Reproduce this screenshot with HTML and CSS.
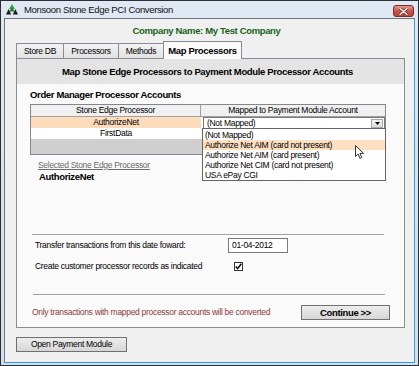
FILE: index.html
```html
<!DOCTYPE html>
<html>
<head>
<meta charset="utf-8">
<link rel="stylesheet" href="styles.css">
</head>
<body>
<div class="window">
  <div class="titlebar">
    <svg class="app-icon" width="12" height="11" viewBox="0 0 12 11">
      <polygon points="6,0 9,5 3,5" fill="#3aa546"/>
      <polygon points="6,3 8.6,7.5 3.4,7.5" fill="#1d7d2b"/>
      <polygon points="2.6,5 5.2,10.5 0,10.5" fill="#1e1e1e"/>
      <polygon points="9.4,5 12,10.5 6.8,10.5" fill="#1e1e1e"/>
    </svg>
    <span class="title">Monsoon Stone Edge PCI Conversion</span>
    <div class="close">
      <svg width="9" height="7" viewBox="0 0 9 7">
        <path d="M1,0.5 L8,6.5 M8,0.5 L1,6.5" stroke="#5a1c18" stroke-width="2.6" stroke-linecap="round"/>
        <path d="M1,0.5 L8,6.5 M8,0.5 L1,6.5" stroke="#ffffff" stroke-width="1.4" stroke-linecap="round"/>
      </svg>
    </div>
  </div>
  <div class="client">
    <div class="company">Company Name: My Test Company</div>
    <div class="tabs">
      <div class="tab tab-store">Store DB</div>
      <div class="tab tab-proc">Processors</div>
      <div class="tab tab-methods">Methods</div>
      <div class="tab tab-map active">Map Processors</div>
    </div>
    <div class="panel">
      <div class="panel-header">Map Stone Edge Processors to Payment Module Processor Accounts</div>
      <div class="panel-body">
        <div class="section-title">Order Manager Processor Accounts</div>
        <div class="grid">
          <div class="grid-head">
            <div class="hcell first">Stone Edge Processor</div>
            <div class="hcell">Mapped to Payment Module Account</div>
          </div>
          <div class="grid-row">
            <div class="cell selected">AuthorizeNet</div>
            <div class="cell combo-cell">
              <div class="combo">
                <span class="combo-text">(Not Mapped)</span>
                <span class="combo-btn">
                  <svg width="5" height="3" viewBox="0 0 5 3"><polygon points="0,0 5,0 2.5,3" fill="#000"/></svg>
                </span>
              </div>
            </div>
          </div>
          <div class="grid-row">
            <div class="cell">FirstData</div>
            <div class="cell"></div>
          </div>
          <div class="dropdown">
            <div class="item">(Not Mapped)</div>
            <div class="item hot">Authorize Net AIM (card not present)</div>
            <div class="item">Authorize Net AIM (card present)</div>
            <div class="item">Authorize Net CIM (card not present)</div>
            <div class="item">USA ePay CGI</div>
          </div>
          <svg class="cursor" width="11" height="15" viewBox="0 0 11 15">
            <path d="M0.5,0.5 L0.5,11.5 L3.1,9.1 L4.9,13.3 L6.8,12.5 L5,8.4 L8.6,8.4 Z" fill="#ffffff" stroke="#333" stroke-width="1" stroke-linejoin="round"/>
          </svg>
        </div>
        <div class="selected-label">Selected Stone Edge Processor</div>
        <div class="selected-value">AuthorizeNet</div>
        <div class="separator sep1"></div>
        <div class="field field-date">
          <span class="field-label date-label">Transfer transactions from this date foward:</span>
          <span class="date-input">01-04-2012</span>
        </div>
        <div class="field field-check">
          <span class="field-label check-label">Create customer processor records as indicated</span>
          <span class="checkbox">
            <svg width="7" height="7" viewBox="0 0 7 7"><path d="M0.8,3.6 L2.6,5.6 L6.3,0.8" fill="none" stroke="#000" stroke-width="1.5"/></svg>
          </span>
        </div>
        <div class="separator sep2"></div>
        <div class="footer">
          <span class="note">Only transactions with mapped processor accounts will be converted</span>
          <span class="btn btn-continue">Continue &gt;&gt;</span>
        </div>
      </div>
    </div>
    <div class="bottom">
      <span class="btn btn-open">Open Payment Module</span>
    </div>
  </div>
</div>
</body>
</html>
```

FILE: styles.css
```css
* { box-sizing: border-box; }

html, body {
  margin: 0;
  padding: 0;
  background: #ffffff;
}

body {
  font-family: "Liberation Sans", Arial, sans-serif;
  font-size: 8.5px;
  letter-spacing: -0.3px;
  color: #000;
}

.window {
  width: 419px;
  height: 366px;
  border: 1px solid #2a2f36;
  background: linear-gradient(#dfe8f3, #d4dfec);
  display: flex;
  flex-direction: column;
  overflow: hidden;
}

.titlebar {
  height: 17px;
  flex: none;
  display: flex;
  align-items: center;
  padding-left: 5px;
}

.app-icon {
  flex: none;
  margin-right: 6px;
}

.title {
  font-size: 9.5px;
  letter-spacing: -0.35px;
  color: #111;
  line-height: 12px;
}

.close {
  margin-left: auto;
  margin-right: 4px;
  margin-top: 3px;
  width: 21px;
  height: 12px;
  border: 1px solid #7c2e28;
  border-radius: 3px;
  background: linear-gradient(#e39a8f, #c9554b 50%, #b8433a);
  display: flex;
  align-items: center;
  justify-content: center;
}

.client {
  flex: 1;
  margin: 0 3px 2px 3px;
  border: 1px solid;
  border-color: #6e7682 #2e9ee2 #2e9ee2 #6e7682;
  background: #f0f0f0;
  padding: 6px 9px 0 11px;
  display: flex;
  flex-direction: column;
}

.company {
  text-align: center;
  font-weight: bold;
  font-size: 9.5px;
  letter-spacing: -0.35px;
  line-height: 12px;
  color: #176317;
  padding-right: 8px;
}

.tabs {
  margin-top: 4px;
  height: 17px;
  display: flex;
  align-items: flex-end;
}

.tab {
  height: 15px;
  border: 1px solid #898c95;
  border-bottom: none;
  background: linear-gradient(#f3f3f3, #e2e2e2);
  display: flex;
  align-items: center;
  justify-content: center;
  line-height: 11px;
  padding-top: 1px;
  white-space: nowrap;
}

.tab + .tab { margin-left: -1px; }

.tab-store { width: 48px; }
.tab-proc { width: 56px; }
.tab-methods { width: 46px; }
.tab-map { width: 79px; }

.tab.active {
  height: 18px;
  margin-bottom: -1px;
  background: #fafafa;
  font-weight: bold;
  font-size: 9.5px;
  letter-spacing: -0.35px;
  position: relative;
  z-index: 2;
  padding-top: 0;
}

.panel {
  width: 389px;
  height: 270px;
  border: 1px solid #898c95;
  background: #fafafa;
  display: flex;
  flex-direction: column;
}

.panel-header {
  height: 25px;
  flex: none;
  background: #e4e4e4;
  display: flex;
  align-items: center;
  justify-content: center;
  font-weight: bold;
  font-size: 9.5px;
  letter-spacing: -0.35px;
  padding-right: 6px;
}

.panel-body {
  padding: 5px 14px 0 13px;
  display: flex;
  flex-direction: column;
}

.section-title {
  font-weight: bold;
  font-size: 9.5px;
  letter-spacing: -0.35px;
  line-height: 12px;
}

.grid {
  margin-top: 3px;
  width: 356px;
  height: 51px;
  border: 1px solid #828790;
  background: #cfcfcf;
  position: relative;
}

.grid-head {
  display: grid;
  grid-template-columns: 170px 1fr;
  height: 12px;
  background: #f0f0f0;
  border-bottom: 1px solid #a0a0a0;
}

.hcell {
  text-align: center;
  line-height: 11px;
}

.hcell.first { border-right: 1px solid #a0a0a0; }

.grid-row {
  display: grid;
  grid-template-columns: 170px 1fr;
  height: 11px;
}

.cell {
  text-align: center;
  line-height: 11px;
  background: #ffffff;
}

.cell.selected { background: #fddcbb; }

.combo-cell { position: relative; }

.combo {
  position: absolute;
  left: 2px;
  top: 0;
  width: 182px;
  height: 13px;
  border: 1px solid #7a7a7a;
  background: #fff;
  display: flex;
  align-items: center;
  text-align: left;
  z-index: 1;
}

.combo-text {
  padding-left: 3px;
  line-height: 11px;
}

.combo-btn {
  margin-left: auto;
  margin-right: 1px;
  width: 12px;
  height: 9px;
  border: 1px solid #a8a8a8;
  background: linear-gradient(#f4f4f4, #dcdcdc);
  display: flex;
  align-items: center;
  justify-content: center;
}

.dropdown {
  position: absolute;
  left: 171px;
  top: 23px;
  width: 184px;
  height: 53px;
  border: 1px solid #646464;
  background: #fff;
  padding-top: 1px;
  z-index: 3;
}

.item {
  height: 10px;
  line-height: 10px;
  padding-left: 2px;
  white-space: nowrap;
}

.item.hot { background: #fde0c2; }

.cursor {
  position: absolute;
  left: 324px;
  top: 40px;
  z-index: 4;
}

.selected-label {
  margin: 4px 0 0 8px;
  line-height: 12px;
  color: #6a6a6a;
  text-decoration: underline;
}

.selected-value {
  margin-left: 9px;
  font-weight: bold;
  font-size: 9.5px;
  letter-spacing: -0.35px;
  line-height: 12px;
}

.separator {
  width: 352px;
  height: 2px;
  border-top: 1px solid #a0a0a0;
  border-bottom: 1px solid #ffffff;
}

.sep1 { margin: 51px 0 0 2px; }
.sep2 { margin: 23px 0 0 3px; }

.field {
  display: flex;
  align-items: center;
  padding-left: 5px;
}

.field-date { margin-top: 2px; height: 15px; }
.field-check { margin-top: 8px; height: 10px; }

.field-label { line-height: 11px; white-space: nowrap; }
.date-label { width: 193px; }
.check-label { width: 199px; }

.date-input {
  width: 60px;
  height: 15px;
  border: 1px solid #7a7a7a;
  background: #fff;
  padding-left: 3px;
  line-height: 13px;
}

.checkbox {
  width: 9px;
  height: 9px;
  border: 1px solid #333;
  background: #fff;
  display: flex;
  align-items: center;
  justify-content: center;
}

.footer {
  margin-top: 9px;
  height: 15px;
  display: flex;
  align-items: center;
}

.note {
  padding-left: 2px;
  color: #8c3a3a;
  line-height: 11px;
  white-space: nowrap;
}

.btn {
  height: 15px;
  border: 1px solid #707070;
  background: linear-gradient(#ededed, #d6d6d6);
  display: flex;
  align-items: center;
  justify-content: center;
  line-height: 11px;
  white-space: nowrap;
}

.btn-continue {
  margin-left: auto;
  width: 89px;
  font-weight: bold;
  font-size: 9.5px;
  letter-spacing: -0.35px;
}

.bottom {
  margin-top: 9px;
  display: flex;
}

.btn-open { width: 111px; }
```
